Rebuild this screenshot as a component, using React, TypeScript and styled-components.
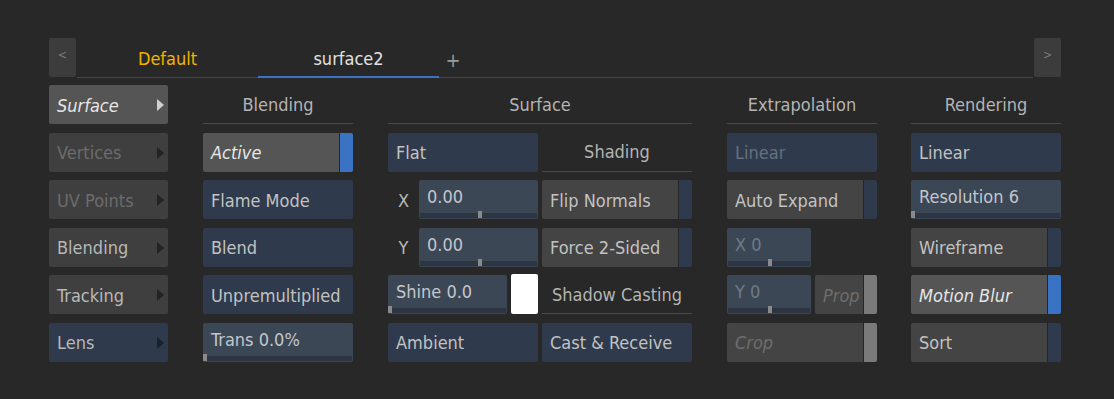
import React from "react";
import styled, { createGlobalStyle } from "styled-components";

const GlobalStyle = createGlobalStyle`
  html, body {
    margin: 0;
    padding: 0;
    background: #282828;
  }
  body {
    font-family: "DejaVu Sans Condensed", "DejaVu Sans", sans-serif;
    font-stretch: condensed;
  }
`;

type Tone = "grey" | "lit" | "blue";
type Ind = "none" | "navy" | "blue" | "grey";

const toneBg: Record<Tone, string> = {
  grey: "#444444",
  lit: "#555555",
  blue: "#2f3b4c",
};

const indBg: Record<Ind, string> = {
  none: "transparent",
  navy: "#2f3b4c",
  blue: "#3b73c4",
  grey: "#7a7a7a",
};

const Page = styled.div`
  padding: 38px 53px 0 49px;
  width: 1012px;
`;

const TabBar = styled.div`
  display: flex;
  height: 40px;
`;

const ArrowBtn = styled.div`
  width: 27px;
  height: 39px;
  background: #3c3c3c;
  border-radius: 2px;
  color: #7a7a7a;
  font-size: 12px;
  display: flex;
  align-items: center;
  justify-content: center;
  padding-bottom: 6px;
  box-sizing: border-box;
`;

const TabStrip = styled.div`
  flex: 1;
  display: flex;
  height: 39px;
  border-bottom: 1px solid #484848;
  margin: 0 1px;
`;

const Tab = styled.div<{ $active?: boolean; $gold?: boolean }>`
  width: 181px;
  display: flex;
  justify-content: center;
  align-items: center;
  padding-top: 3px;
  box-sizing: border-box;
  font-size: 18px;
  color: ${(p) => (p.$gold ? "#f2b300" : "#e2e2e2")};
  border-bottom: 2px solid ${(p) => (p.$active ? "#3b73c4" : "transparent")};
  margin-bottom: -1px;
`;

const PlusTab = styled.div`
  width: 28px;
  display: flex;
  justify-content: center;
  align-items: center;
  padding-top: 4px;
  color: #9a9a9a;
  font-size: 20px;
`;

const Body = styled.div`
  display: flex;
  margin-top: 7px;
`;

const Column = styled.div<{ $w: number; $ml?: number }>`
  width: ${(p) => p.$w}px;
  margin-left: ${(p) => p.$ml ?? 0}px;
  display: grid;
  grid-auto-rows: 39px;
  row-gap: 8.6px;
`;

const SubGrid = styled.div`
  display: grid;
  grid-template-columns: 150px 150px;
  column-gap: 4px;
  grid-auto-rows: 39px;
  row-gap: 8.6px;
`;

const Header = styled.div`
  display: flex;
  align-items: center;
  justify-content: center;
  border-bottom: 1px solid #4a4a4a;
  color: #b4b4b4;
  font-size: 18px;
  box-sizing: border-box;
`;

const textColor = (tone: Tone, dim?: boolean) =>
  dim ? (tone === "blue" ? "#65707d" : "#6e6e6e") : tone === "lit" ? "#e6e6e6" : "#c2c2c2";

const Btn = styled.div<{ $tone: Tone; $dim?: boolean; $italic?: boolean }>`
  display: flex;
  align-items: stretch;
  background: #262626;
  border-radius: 2px;
  overflow: hidden;
  gap: 1px;
  font-size: 18px;
  font-style: ${(p) => (p.$italic ? "italic" : "normal")};
  color: ${(p) => textColor(p.$tone, p.$dim)};
`;

const BtnFace = styled.div<{ $tone: Tone }>`
  flex: 1;
  background: ${(p) => toneBg[p.$tone]};
  display: flex;
  align-items: center;
  padding: 1px 8px 0 8px;
  white-space: nowrap;
  overflow: hidden;
`;

const Indicator = styled.div<{ $ind: Ind }>`
  width: 13px;
  background: ${(p) => indBg[p.$ind]};
`;

const NavBtn = styled.div<{ $tone: Tone; $dim?: boolean; $italic?: boolean }>`
  display: flex;
  align-items: center;
  justify-content: space-between;
  padding: 1px 4px 0 8px;
  border-radius: 2px;
  background: ${(p) => (p.$tone === "grey" ? "#3f3f3f" : toneBg[p.$tone])};
  font-size: 18px;
  font-style: ${(p) => (p.$italic ? "italic" : "normal")};
  color: ${(p) => (p.$dim ? "#6c6c6c" : p.$tone === "lit" ? "#e6e6e6" : "#b8b8b8")};
`;

const NavArrow = styled.span<{ $color: string }>`
  width: 0;
  height: 0;
  border-top: 6.5px solid transparent;
  border-bottom: 6.5px solid transparent;
  border-left: 7px solid ${(p) => p.$color};
`;

const SliderBox = styled.div<{ $dim?: boolean }>`
  position: relative;
  background: #3c4756;
  border-radius: 2px;
  overflow: hidden;
  display: flex;
  align-items: flex-start;
  padding: 6px 8px 0 8px;
  box-sizing: border-box;
  font-size: 18px;
  color: ${(p) => (p.$dim ? "#6f7a87" : "#c2c6cc")};
  white-space: nowrap;
`;

const Track = styled.div`
  position: absolute;
  left: 1px;
  right: 1px;
  bottom: 1px;
  height: 5px;
  background: #2c3541;
`;

const Handle = styled.div`
  position: absolute;
  bottom: 0;
  width: 4px;
  height: 7px;
  margin-left: -2px;
  background: #8a8a8a;
`;

const AxisRow = styled.div`
  display: flex;
  align-items: stretch;
`;

const AxisLabel = styled.div`
  width: 31px;
  display: flex;
  align-items: center;
  justify-content: center;
  padding-top: 1px;
  color: #b8b8b8;
  font-size: 18px;
`;

const ShineRow = styled.div`
  display: flex;
  gap: 4px;
`;

const Swatch = styled.div`
  width: 27px;
  background: #ffffff;
  border-radius: 2px;
  margin-top: -1px;
`;

const SplitRow = styled.div<{ $first: number }>`
  display: grid;
  grid-template-columns: ${(p) => p.$first}px 1fr;
  column-gap: 4px;
`;

const Empty = styled.div``;

const Button: React.FC<{
  label: string;
  tone: Tone;
  ind?: Ind;
  dim?: boolean;
  italic?: boolean;
}> = ({ label, tone, ind = "none", dim, italic }) => (
  <Btn $tone={tone} $dim={dim} $italic={italic}>
    <BtnFace $tone={tone}>{label}</BtnFace>
    {ind !== "none" && <Indicator $ind={ind} />}
  </Btn>
);

const Slider: React.FC<{ label: string; pos: number; dim?: boolean; style?: React.CSSProperties }> = ({
  label,
  pos,
  dim,
  style,
}) => (
  <SliderBox $dim={dim} style={style}>
    {label}
    <Track>
      <Handle style={{ left: `${pos}%` }} />
    </Track>
  </SliderBox>
);

const navItems: { label: string; tone: Tone; dim?: boolean; italic?: boolean; arrow: string }[] = [
  { label: "Surface", tone: "lit", italic: true, arrow: "#d0d0d0" },
  { label: "Vertices", tone: "grey", dim: true, arrow: "#232323" },
  { label: "UV Points", tone: "grey", dim: true, arrow: "#232323" },
  { label: "Blending", tone: "grey", arrow: "#232323" },
  { label: "Tracking", tone: "grey", arrow: "#232323" },
  { label: "Lens", tone: "blue", arrow: "#18202c" },
];

const App: React.FC = () => {
  return (
    <>
      <GlobalStyle />
      <Page>
        <TabBar>
          <ArrowBtn>&lt;</ArrowBtn>
          <TabStrip>
            <Tab $gold>Default</Tab>
            <Tab $active>surface2</Tab>
            <PlusTab>+</PlusTab>
          </TabStrip>
          <ArrowBtn>&gt;</ArrowBtn>
        </TabBar>

        <Body>
          <Column $w={119}>
            {navItems.map((n) => (
              <NavBtn key={n.label} $tone={n.tone} $dim={n.dim} $italic={n.italic}>
                {n.label}
                <NavArrow $color={n.arrow} />
              </NavBtn>
            ))}
          </Column>

          <Column $w={150} $ml={35}>
            <Header>Blending</Header>
            <Button label="Active" tone="lit" italic ind="blue" />
            <Button label="Flame Mode" tone="blue" />
            <Button label="Blend" tone="blue" />
            <Button label="Unpremultiplied" tone="blue" />
            <Slider label="Trans 0.0%" pos={0.5} />
          </Column>

          <Column $w={304} $ml={35}>
            <Header>Surface</Header>
            <SubGrid>
              <Button label="Flat" tone="blue" />
              <Header>Shading</Header>
              <AxisRow>
                <AxisLabel>X</AxisLabel>
                <Slider label="0.00" pos={51} style={{ flex: 1 }} />
              </AxisRow>
              <Button label="Flip Normals" tone="grey" ind="navy" />
              <AxisRow>
                <AxisLabel>Y</AxisLabel>
                <Slider label="0.00" pos={51} style={{ flex: 1 }} />
              </AxisRow>
              <Button label="Force 2-Sided" tone="grey" ind="navy" />
              <ShineRow>
                <Slider label="Shine 0.0" pos={0.5} style={{ flex: 1 }} />
                <Swatch />
              </ShineRow>
              <Header>Shadow Casting</Header>
              <Button label="Ambient" tone="blue" />
              <Button label="Cast &amp; Receive" tone="blue" />
            </SubGrid>
          </Column>

          <Column $w={150} $ml={35}>
            <Header>Extrapolation</Header>
            <Button label="Linear" tone="blue" dim />
            <Button label="Auto Expand" tone="grey" ind="navy" />
            <SplitRow $first={84}>
              <Slider label="X 0" pos={51} dim />
              <Empty />
            </SplitRow>
            <SplitRow $first={84}>
              <Slider label="Y 0" pos={51} dim />
              <Button label="Prop" tone="grey" dim italic ind="grey" />
            </SplitRow>
            <Button label="Crop" tone="grey" dim italic ind="grey" />
          </Column>

          <Column $w={150} $ml={34}>
            <Header>Rendering</Header>
            <Button label="Linear" tone="blue" />
            <Slider label="Resolution 6" pos={1} />
            <Button label="Wireframe" tone="grey" ind="navy" />
            <Button label="Motion Blur" tone="lit" italic ind="blue" />
            <Button label="Sort" tone="grey" ind="navy" />
          </Column>
        </Body>
      </Page>
    </>
  );
};

export default App;
